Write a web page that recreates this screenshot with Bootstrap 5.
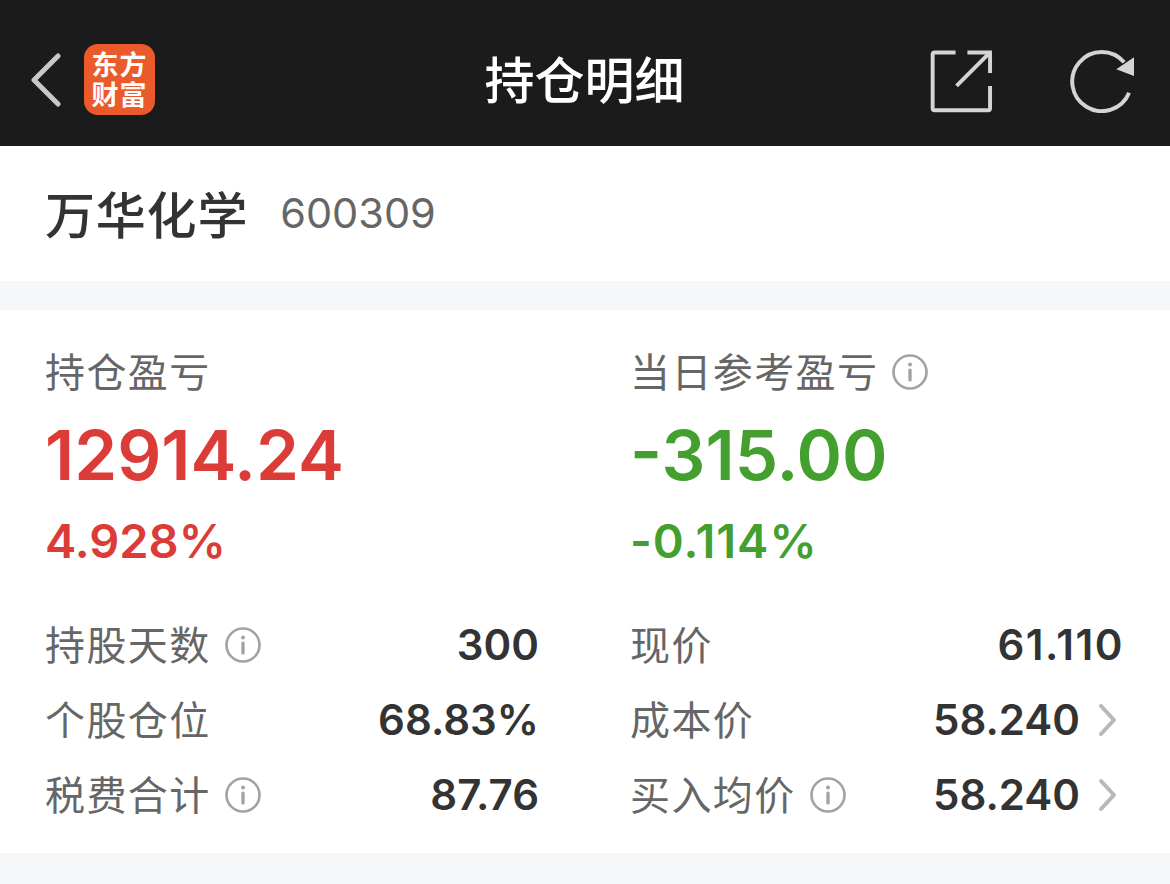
<!DOCTYPE html>
<html lang="zh-CN">
<head>
  <meta charset="UTF-8" />
  <title>持仓明细</title>
  <meta name="viewport" content="width=device-width, initial-scale=1" />
  <link href="https://cdn.jsdelivr.net/npm/bootstrap@5.3.0/dist/css/bootstrap.min.css" rel="stylesheet" />
  <style>
    body { background: #f6f7f9; font-family: "Noto Sans CJK SC", "Liberation Sans", sans-serif; color: #333; }
    .top-bar { height: 146px; background: #1b1b1b; padding: 14px 35px 0 30px; }
    .top-title { font-size: 50px; font-weight: 500; color: #fff; line-height: 1; letter-spacing: 0; padding-bottom: 6px; }
    .top-side { width: 206px; }
    .top-side-left { width: 210px; }
    .logo-box { width: 71px; height: 71px; border-radius: 14px; background: #ea5a2a; color: #fff; font-size: 27px; font-weight: 700; line-height: 30px; letter-spacing: 1px; padding-top: 5px; margin-left: 22px; margin-bottom: 2px; flex: none; }
    .share-icon { margin-right: 76px; }
    .stock-row { height: 135px; background: #fff; padding: 0 45px 4px; gap: 32px; margin-bottom: 29px; }
    .stock-name { font-size: 50px; color: #333; line-height: 1; letter-spacing: 0.8px; font-weight: 500; }
    .stock-code { font-family: Inter, sans-serif; font-size: 41.5px; color: #666; line-height: 1; padding-top: 4px; }
    .detail-box { height: 543px; background: #fff; padding: 36px 46px 0 45px; }
    .detail-col-left { width: 494px; margin-right: 91px; }
    .detail-col-right { width: 494px; }
    .label-text { font-size: 40px; color: #666; line-height: 48px; letter-spacing: 1.4px; padding-bottom: 4px; height: 52px; }
    .big-num { font-family: Inter, sans-serif; font-size: 69px; font-weight: 600; line-height: 82px; margin-top: 16px; }
    .pct-num { font-family: Inter, sans-serif; font-size: 47px; font-weight: 600; line-height: 54px; margin-top: 18px; margin-bottom: 39px; }
    .pct-wide { letter-spacing: 1px; }
    .up-red { color: #dc3c38; }
    .down-green { color: #43a02f; }
    .stat-row { height: 75px; }
    .stat-num { font-family: Inter, sans-serif; font-size: 42px; font-weight: 600; color: #333; line-height: 1; }
    .stat-wide { letter-spacing: 1.5px; }
    .tip-icon { width: 36px; height: 36px; margin-left: 14px; margin-top: 4px; flex: none; }
    .more-icon { width: 22px; height: 34px; margin-left: 17px; margin-right: 5px; }
  </style>
</head>
<body>
<div class="top-bar d-flex align-items-center justify-content-between">
  <div class="top-side-left d-flex align-items-center">
    <svg width="32" height="54" viewBox="0 0 32 54" fill="none" stroke="#c8c8c8" stroke-width="5" stroke-linecap="round" stroke-linejoin="round"><path d="M28 3 L4 27 L28 51" /></svg>
    <div class="logo-box text-center">东方<br />财富</div>
  </div>
  <div class="top-title">持仓明细</div>
  <div class="top-side d-flex align-items-center justify-content-end">
    <svg class="share-icon" width="66" height="66" viewBox="0 0 66 66" fill="none" stroke="#d4d4d4" stroke-width="4"><path d="M27 5 H5.700 Q3.700 5 3.700 7 V61.700 Q3.700 63.700 5.700 63.700 H60 Q62 63.700 62 61.700 V39" /><path d="M39 5 H62 V26" /><path d="M28 39 L61 6" /></svg>
    <svg width="66" height="66" viewBox="0 0 66 66" fill="none"><path d="M60 46 A30 30 0 1 1 55 15" stroke="#d4d4d4" stroke-width="4" /><path d="M65 10 V29 L47 22 Z" fill="#d4d4d4" /></svg>
  </div>
</div>

<div class="stock-row d-flex align-items-center">
  <div class="stock-name">万华化学</div>
  <div class="stock-code">600309</div>
</div>

<div class="detail-box d-flex">
  <div class="detail-col-left">
    <div class="label-text">持仓盈亏</div>
    <div class="big-num up-red">12914.24</div>
    <div class="pct-num up-red">4.928%</div>
    <div class="stat-row d-flex align-items-center justify-content-between">
      <div class="label-text d-flex align-items-center">持股天数<svg class="tip-icon" viewBox="0 0 36 36"><use href="#tipGlyph" /></svg></div>
      <div class="stat-num">300</div>
    </div>
    <div class="stat-row d-flex align-items-center justify-content-between">
      <div class="label-text">个股仓位</div>
      <div class="stat-num">68.83%</div>
    </div>
    <div class="stat-row d-flex align-items-center justify-content-between">
      <div class="label-text d-flex align-items-center">税费合计<svg class="tip-icon" viewBox="0 0 36 36"><use href="#tipGlyph" /></svg></div>
      <div class="stat-num">87.76</div>
    </div>
  </div>
  <div class="detail-col-right">
    <div class="label-text d-flex align-items-center">当日参考盈亏<svg class="tip-icon" viewBox="0 0 36 36"><use href="#tipGlyph" /></svg></div>
    <div class="big-num down-green">-315.00</div>
    <div class="pct-num pct-wide down-green">-0.114%</div>
    <div class="stat-row d-flex align-items-center justify-content-between">
      <div class="label-text">现价</div>
      <div class="stat-num stat-wide">61.110</div>
    </div>
    <div class="stat-row d-flex align-items-center justify-content-between">
      <div class="label-text">成本价</div>
      <div class="d-flex align-items-center">
        <div class="stat-num">58.240</div>
        <svg class="more-icon" viewBox="0 0 22 34"><use href="#moreGlyph" /></svg>
      </div>
    </div>
    <div class="stat-row d-flex align-items-center justify-content-between">
      <div class="label-text d-flex align-items-center">买入均价<svg class="tip-icon" viewBox="0 0 36 36"><use href="#tipGlyph" /></svg></div>
      <div class="d-flex align-items-center">
        <div class="stat-num">58.240</div>
        <svg class="more-icon" viewBox="0 0 22 34"><use href="#moreGlyph" /></svg>
      </div>
    </div>
  </div>
</div>

<svg width="0" height="0" class="d-block">
  <defs>
    <g id="tipGlyph">
      <circle cx="18" cy="18" r="16.5" fill="none" stroke="#a3a3a3" stroke-width="2.6" />
      <circle cx="18" cy="10.5" r="2" fill="#a3a3a3" />
      <rect x="16.3" y="14.5" width="3.4" height="13" rx="1.5" fill="#a3a3a3" />
    </g>
    <path id="moreGlyph" d="M4 3 L17 17 L4 31" fill="none" stroke="#b8b8b8" stroke-width="4" stroke-linecap="round" stroke-linejoin="round" />
  </defs>
</svg>

<script src="https://cdn.jsdelivr.net/npm/bootstrap@5.3.0/dist/js/bootstrap.bundle.min.js"></script>
</body>
</html>
